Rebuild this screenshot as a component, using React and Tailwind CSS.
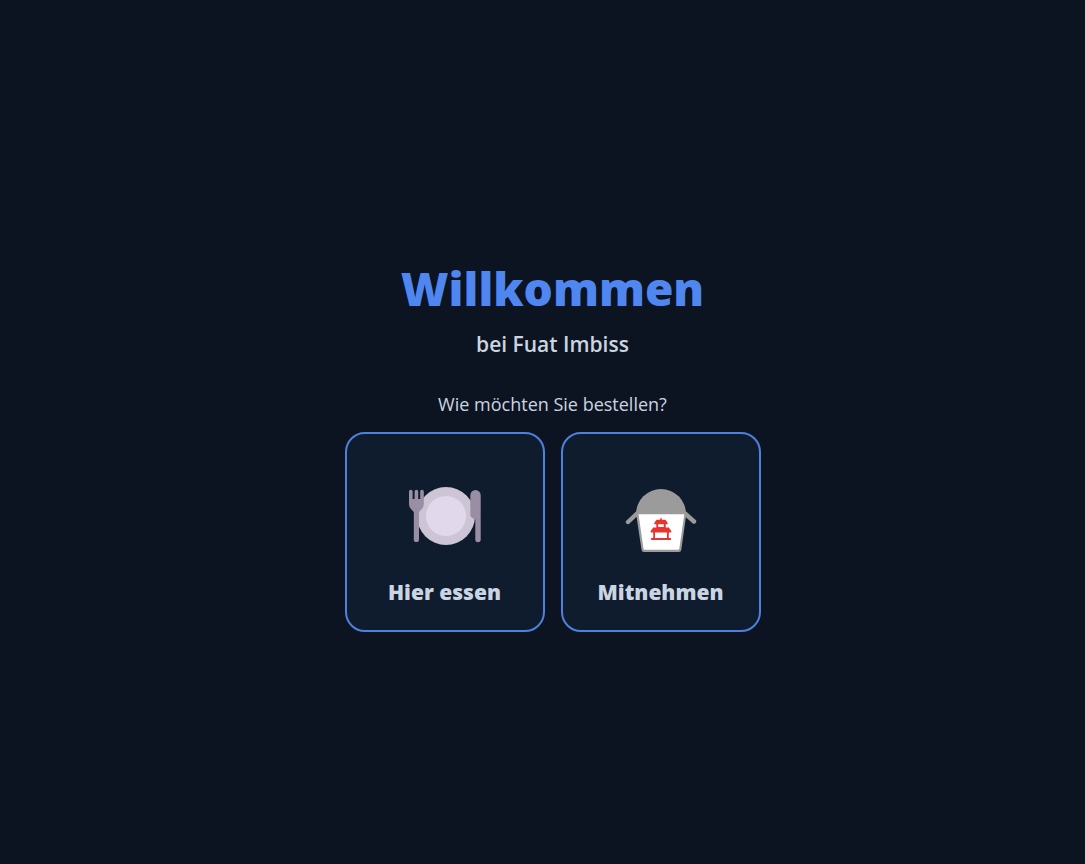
function PlateIcon() {
  return (
    <svg viewBox="0 0 72 72" className="size-18" aria-hidden="true">
      <circle cx="37" cy="36" r="29" fill="#cdc4d6" />
      <circle cx="37" cy="36" r="20" fill="#e1d8ec" />
      {/* fork */}
      <path
        d="M0 11.5a1.8 1.8 0 0 1 3.6 0V19h2V11.5a1.8 1.8 0 0 1 3.6 0V19h2V11.5a1.8 1.8 0 0 1 3.6 0V24q0 3-2 5l-2.8 3V59.5a2.6 2.6 0 0 1-5.2 0V32L2 29q-2-2-2-5Z"
        fill="#998ea4"
      />
      {/* knife */}
      <path
        d="M61.3 15.2a5.2 5.2 0 0 1 10.4 0V59.5a2.6 2.6 0 0 1-5.4 0V39.5l-3.3-1.8q-1.7-1-1.7-3Z"
        fill="#998ea4"
      />
    </svg>
  )
}

function TakeoutIcon() {
  return (
    <svg viewBox="0 0 72 72" className="size-18" aria-hidden="true">
      <path d="M12 33.5 3 42M60 33.5 69 41.5" stroke="#9b9b9b" strokeWidth="4.4" strokeLinecap="round" />
      <path d="M11 34a25 25 0 0 1 50 0v3H11Z" fill="#9b9b9b" />
      <path d="M11 33h50.5L56.3 69.8q-.3 2.2-2.5 2.2H19q-2.2 0-2.5-2.2Z" fill="#9b9b9b" />
      <path d="M13.5 34.3h45.8l-5 34.4q-.2 1.1-1.3 1.1H19.8q-1.1 0-1.3-1.1Z" fill="#fff" />
      {/* pagoda */}
      <path
        d="M35.2 38.3h1.6v1.5h3.7l2.2 3.3v1.2h-2v3.1h3.1l2.5 3.6v1.5h-2.5v5.6h1.4q1 0 1 1t-1 1H26.8q-1 0-1-1t1-1h1.4v-5.6h-2.5V51l2.5-3.6h3.1v-3.1h-2v-1.2l2.2-3.3h3.7ZM33.2 44.3v2.6h5.6v-2.6ZM30 52.5v5.6h12v-5.6Z"
        fill="#e6352f"
        fillRule="evenodd"
      />
    </svg>
  )
}

const options = [
  { id: 'dine-in', label: 'Hier essen', Icon: PlateIcon },
  { id: 'takeaway', label: 'Mitnehmen', Icon: TakeoutIcon },
]

export default function App() {
  return (
    <main className="flex min-h-screen flex-col items-center justify-center bg-[#0b1420] pt-6 pl-5 text-center font-['Open_Sans','Noto_Sans',sans-serif] text-[#cbd5e1]">
      <h1 className="text-[46px] leading-16 font-black text-[#4f86f0]">Willkommen</h1>
      <h2 className="mt-2 text-[21px] leading-8 font-semibold">bei Fuat Imbiss</h2>
      <p className="mt-8 text-[18px] leading-6">Wie möchten Sie bestellen?</p>

      <div className="mt-4 flex gap-4">
        {options.map(({ id, label, Icon }) => (
          <button
            key={id}
            type="button"
            className="flex size-50 flex-col items-center justify-center gap-6 rounded-[20px] border-2 border-[#4f80dc] bg-[#0f1c2d] pt-6 text-[21px] leading-8 font-extrabold"
          >
            <Icon />
            <span>{label}</span>
          </button>
        ))}
      </div>
    </main>
  )
}
